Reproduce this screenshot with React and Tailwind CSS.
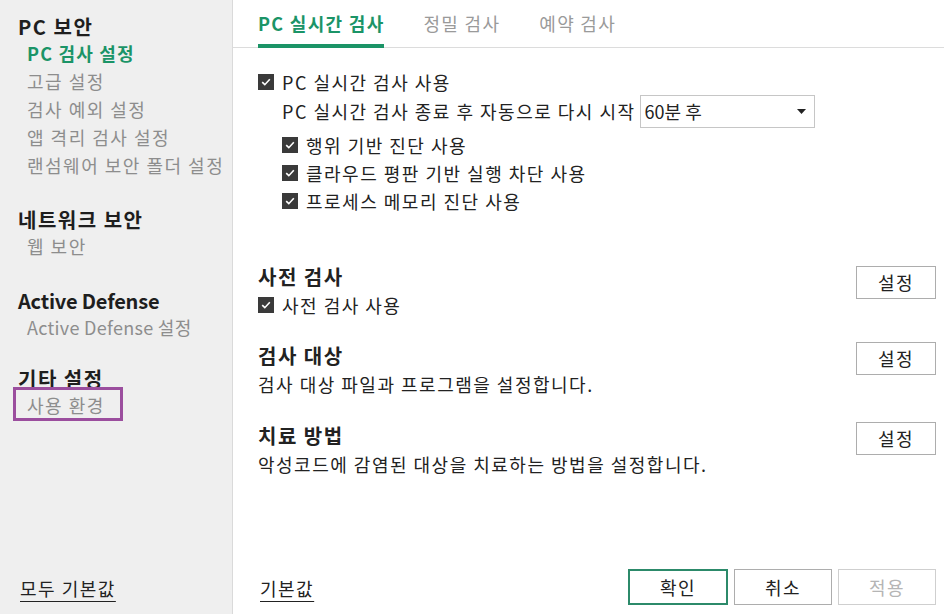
const font = { fontFamily: '"Noto Sans CJK KR", "Noto Sans", sans-serif' };

const Check = () => (
  <span className="flex h-[16px] w-[16px] shrink-0 items-center justify-center bg-[#3a3a3a]">
    <svg width="12" height="12" viewBox="0 0 12 12" fill="none">
      <path d="M2.2 6.2 L4.8 8.7 L9.8 3.2" stroke="#ffffff" strokeWidth="1.6" />
    </svg>
  </span>
);

const CheckRow = ({ label, className = "" }) => (
  <div className={`flex h-[28px] items-center gap-[8px] ${className}`}>
    <Check />
    <span>{label}</span>
  </div>
);

const SetButton = ({ className = "" }) => (
  <button className={`h-[33px] w-[80px] border border-[#adadad] bg-white text-[18px] tracking-[1.5px] text-[#222] ${className}`}>
    설정
  </button>
);

const groups = [
  { title: "PC 보안", items: ["고급 설정", "검사 예외 설정", "앱 격리 검사 설정", "랜섬웨어 보안 폴더 설정"], active: "PC 검사 설정", gap: "mt-0" },
  { title: "네트워크 보안", items: ["웹 보안"], gap: "mt-[29px]" },
  { title: "Active Defense", items: ["Active Defense 설정"], gap: "mt-[29px]", latin: true },
  { title: "기타 설정", items: ["사용 환경"], boxed: true, gap: "mt-[26px]" },
];

const App = () => {
  return (
    <div className="flex h-[614px] w-[944px] overflow-hidden bg-white text-[#222]" style={font}>
      {/* sidebar */}
      <div className="flex w-[233px] shrink-0 flex-col border-r border-[#dadada] bg-[#efefef] pl-[18px]">
        <div className="flex flex-col pt-[15px]">
          {groups.map((g) => (
            <div key={g.title} className={`flex flex-col ${g.gap}`}>
              <div className={`text-[20px] font-bold leading-[24px] text-[#1e1e1e] ${g.latin ? "tracking-[-0.2px]" : "tracking-[1.5px]"}`}>
                {g.title}
              </div>
              <div className={`flex flex-col pl-[9px] ${g.latin ? "tracking-[0.3px]" : "tracking-[1.5px]"}`}>
                {g.active && (
                  <div className="text-[18px] font-bold leading-[28px] tracking-[1.2px] text-[#1b9467]">{g.active}</div>
                )}
                {g.items.map((it) => (
                  <div key={it} className="relative text-[18px] leading-[28px] text-[#8d8d8d]">
                    {it}
                    {g.boxed && (
                      <span className="absolute left-[-14px] top-[-4px] h-[34px] w-[110px] border-[3px] border-[#9b4e9e]" />
                    )}
                  </div>
                ))}
              </div>
            </div>
          ))}
        </div>
        <div className="mt-auto pb-[12px] pl-[2px]">
          <span className="text-[18px] leading-[28px] tracking-[1.5px] text-[#222] underline decoration-1 underline-offset-[5px]">모두 기본값</span>
        </div>
      </div>

      {/* main */}
      <div className="flex flex-1 flex-col">
        <div className="flex h-[48px] shrink-0 items-stretch gap-[39px] border-b border-[#dcdcdc] pl-[25px] tracking-[1.3px]">
          <div className="relative flex items-center text-[18px] font-bold text-[#1b9467]">
            PC 실시간 검사
            <span className="absolute bottom-[-1px] left-0 right-[1px] h-[4px] bg-[#1b9467]" />
          </div>
          <div className="flex items-center text-[18px] text-[#9a9a9a]">정밀 검사</div>
          <div className="flex items-center text-[18px] text-[#9a9a9a]">예약 검사</div>
        </div>

        <div className="flex flex-1 flex-col pl-[25px] pr-[8px] text-[18px] tracking-[1.5px]">
          <div className="mt-[21px] flex h-[26px] items-center gap-[8px]">
            <Check />
            <span>PC 실시간 검사 사용</span>
          </div>
          <div className="flex h-[33px] items-center pl-[24px]">
            <span>PC 실시간 검사 종료 후 자동으로 다시 시작</span>
            <div className="ml-[4px] flex h-[33px] w-[175px] items-center justify-between border border-[#c6c6c6] pl-[4px] pr-[8px] tracking-normal">
              <span>60분 후</span>
              <svg width="9" height="5" viewBox="0 0 9 5">
                <path d="M0 0 H9 L4.5 5 Z" fill="#222" />
              </svg>
            </div>
          </div>
          <div className="mt-[3px] flex flex-col pl-[24px]">
            <CheckRow label="행위 기반 진단 사용" />
            <CheckRow label="클라우드 평판 기반 실행 차단 사용" />
            <CheckRow label="프로세스 메모리 진단 사용" />
          </div>

          <div className="mt-[48px] flex justify-between">
            <div className="flex flex-col">
              <div className="text-[20px] font-bold leading-[28px]">사전 검사</div>
              <CheckRow label="사전 검사 사용" />
            </div>
            <SetButton className="mt-[3px]" />
          </div>

          <div className="mt-[23px] flex justify-between">
            <div className="flex flex-col">
              <div className="text-[20px] font-bold leading-[28px]">검사 대상</div>
              <div className="leading-[28px]">검사 대상 파일과 프로그램을 설정합니다.</div>
            </div>
            <SetButton />
          </div>

          <div className="mt-[24px] flex justify-between">
            <div className="flex flex-col">
              <div className="text-[20px] font-bold leading-[28px]">치료 방법</div>
              <div className="leading-[28px]">악성코드에 감염된 대상을 치료하는 방법을 설정합니다.</div>
            </div>
            <SetButton />
          </div>

          <div className="mt-auto flex items-end justify-between pb-[9px] pl-[2px]">
            <span className="mb-[3px] text-[18px] leading-[28px] underline decoration-1 underline-offset-[5px]">기본값</span>
            <div className="flex gap-[6px]">
              <button className="h-[36px] w-[100px] border-2 border-[#2c8a6a] bg-white text-[18px] text-[#222]">확인</button>
              <button className="h-[36px] w-[98px] border border-[#adadad] bg-white text-[18px] text-[#222]">취소</button>
              <button className="h-[36px] w-[98px] border border-[#cfcfcf] bg-white text-[18px] text-[#b5b5b5]">적용</button>
            </div>
          </div>
        </div>
      </div>
    </div>
  );
};

export default App;
